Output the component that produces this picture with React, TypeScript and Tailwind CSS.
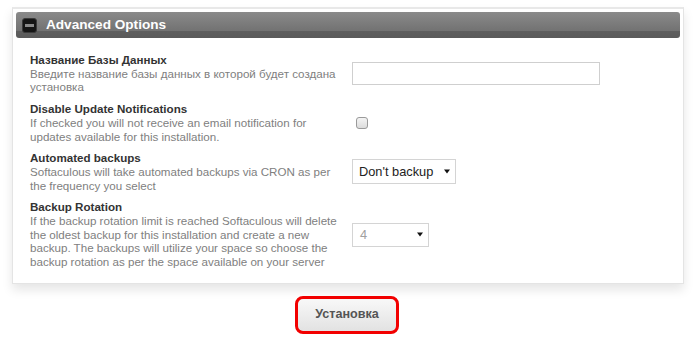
import React from 'react'

const rows = [
  {
    title: 'Название Базы Данных',
    desc: 'Введите название базы данных в которой будет создана установка',
    control: 'input',
  },
  {
    title: 'Disable Update Notifications',
    desc: 'If checked you will not receive an email notification for updates available for this installation.',
    control: 'checkbox',
  },
  {
    title: 'Automated backups',
    desc: 'Softaculous will take automated backups via CRON as per the frequency you select',
    control: 'backup',
  },
  {
    title: 'Backup Rotation',
    desc: 'If the backup rotation limit is reached Softaculous will delete the oldest backup for this installation and create a new backup. The backups will utilize your space so choose the backup rotation as per the space available on your server',
    control: 'rotation',
  },
]

function Caret() {
  return (
    <svg width="6" height="5" viewBox="0 0 6 5" className="shrink-0">
      <path d="M0 0.5 H6 L3 4.5 Z" fill="#111" />
    </svg>
  )
}

function Control({ kind }: { kind: string }) {
  if (kind === 'input') {
    return <div className="self-start w-[248px] h-[23px] border border-[#cfcfcf] bg-white" />
  }
  if (kind === 'checkbox') {
    return (
      <div className="ml-[4px] w-[12px] h-[12px] rounded-[3px] border border-[#9a9a9a] bg-[linear-gradient(to_bottom,#f4f4f4,#dcdcdc)]" />
    )
  }
  if (kind === 'backup') {
    return (
      <div className="w-[104px] h-[25px] border border-[#d4d4d4] bg-white flex items-center justify-between pl-[6px] pr-[5px]">
        <span className="text-[12.8px] text-[#222]">Don't backup</span>
        <Caret />
      </div>
    )
  }
  return (
    <div className="w-[77px] h-[24px] border border-[#d4d4d4] bg-white flex items-center justify-between pl-[7px] pr-[5px]">
      <span className="text-[12.8px] text-[#a0a0a0]">4</span>
      <Caret />
    </div>
  )
}

export default function App() {
  return (
    <div className="w-[694px] h-[357px] bg-white pt-[7px] font-['Liberation_Sans',Arial,sans-serif] overflow-hidden">
      <div className="ml-[12px] w-[672px] border border-[#e4e4e4] border-t-2 border-t-[#e8e8e8] bg-white shadow-[0_6px_10px_rgba(0,0,0,0.10)]">
        <div className="mx-[3px] mt-[3px] h-[26px] rounded-[3px] bg-[linear-gradient(to_bottom,#8a8a8a_0%,#727272_73%,#5e5e5e_73%,#5a5a5a_100%)] flex items-center pl-[6px]">
          <div className="w-[15px] h-[15px] rounded-[3px] bg-[#151515] border border-[#3a3a3a] flex items-center justify-center">
            <div className="w-[9px] h-[3px] bg-[#8a8a8a]" />
          </div>
          <span className="ml-[9px] text-[13.6px] font-bold text-white">Advanced Options</span>
        </div>
        <div className="pl-[17px] pt-[15px] pb-[14px]">
          {rows.map((r, i) => (
            <div key={i} className={`flex items-center ${i < rows.length - 1 ? 'mb-[8px]' : ''}`}>
              <div className="w-[312px] text-[11.6px] leading-[13.7px]">
                <div className="font-bold text-[#333]">{r.title}</div>
                <div className="text-[#808080]">{r.desc}</div>
              </div>
              <div className="ml-[10px] flex">
                <Control kind={r.control} />
              </div>
            </div>
          ))}
        </div>
      </div>
      <div className="flex justify-center mt-[12px]">
        <div className="w-[104px] h-[38px] rounded-[8px] border-[3px] border-[#f20000] bg-[linear-gradient(to_bottom,#f8f8f8,#e2e2e2)] flex items-center justify-center">
          <span className="text-[12.6px] font-bold text-[#555]">Установка</span>
        </div>
      </div>
    </div>
  )
}
